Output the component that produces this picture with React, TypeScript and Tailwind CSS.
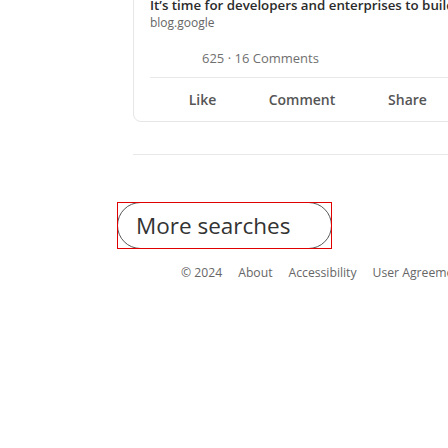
const font = { fontFamily: '"Open Sans", "Noto Sans", Arial, sans-serif' };

function ActionSlot({ label, width }: { label: string; width: string }) {
  return (
    <div className={`${width} text-center text-[14px] leading-[20px] font-semibold text-[#555]`}>{label}</div>
  );
}

export default function App() {
  return (
    <div className="w-[448px] h-[448px] overflow-hidden bg-white" style={font}>
      <div className="ml-[133px] w-[560px]">
        {/* post card, top cut off by scroll */}
        <div className="-mt-[20px] pt-[14px] pl-[16px] pb-[11px] border border-[#e6e6e6] rounded-lg">
          <div className="text-[13.3px] leading-[20px] font-semibold text-[#2b2b2b] whitespace-nowrap">
            It’s time for developers and enterprises to build with Gemini
          </div>
          <div className="text-[12px] leading-[16px] text-[#666]">blog.google</div>
          <div className="mt-[17px] pl-[52px] text-[13px] leading-[20px] text-[#707070]">625 · 16 Comments</div>
          <div className="mt-[9px] h-px bg-[#e8e8e8]" />
          <div className="mt-[12px] flex">
            <ActionSlot label="Like" width="w-[105px]" />
            <ActionSlot label="Comment" width="w-[94px]" />
            <ActionSlot label="Share" width="w-[117px]" />
          </div>
        </div>

        <div className="mt-[32px] h-px bg-[#e8e8e8]" />
      </div>

      {/* more searches */}
      <div className="ml-[117px] mt-[47px] relative w-[215px] h-[47px]">
        <div className="w-full h-full rounded-full border border-[#555] flex items-center pl-[18px]">
          <span className="text-[22.5px] text-[#333]">More searches</span>
        </div>
        <div className="absolute inset-0 border border-[#e00000]" />
      </div>

      {/* footer */}
      <div className="ml-[181px] mt-[15px] flex gap-[16px] text-[12.2px] leading-[18px] text-[#666] whitespace-nowrap">
        <span>© 2024</span>
        <span>About</span>
        <span>Accessibility</span>
        <span>User Agreement</span>
      </div>
    </div>
  );
}
